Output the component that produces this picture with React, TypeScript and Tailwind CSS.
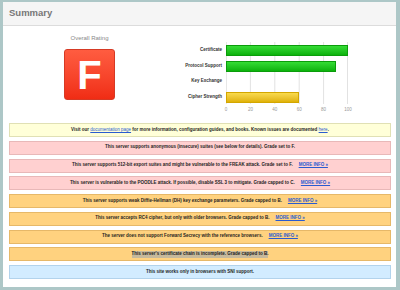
const bars = [
  { label: "Certificate", width: "w-[122px]", color: "green" },
  { label: "Protocol Support", width: "w-[110px]", color: "green" },
  { label: "Key Exchange", width: "w-0", color: "none" },
  { label: "Cipher Strength", width: "w-[73px]", color: "yellow" },
]

const ticks = ["0", "20", "40", "60", "80", "100"]

type Notice = {
  tone: "yellow" | "pink" | "orange" | "blue"
  text: string
  more?: boolean
  highlight?: boolean
}

const notices: Notice[] = [
  { tone: "pink", text: "This server supports anonymous (insecure) suites (see below for details). Grade set to F." },
  { tone: "pink", text: "This server supports 512-bit export suites and might be vulnerable to the FREAK attack. Grade set to F.", more: true },
  { tone: "pink", text: "This server is vulnerable to the POODLE attack. If possible, disable SSL 3 to mitigate. Grade capped to C.", more: true },
  { tone: "orange", text: "This server supports weak Diffie-Hellman (DH) key exchange parameters. Grade capped to B.", more: true },
  { tone: "orange", text: "This server accepts RC4 cipher, but only with older browsers. Grade capped to B.", more: true },
  { tone: "orange", text: "The server does not support Forward Secrecy with the reference browsers.", more: true },
  { tone: "orange", text: "This server's certificate chain is incomplete. Grade capped to B.", highlight: true },
  { tone: "blue", text: "This site works only in browsers with SNI support." },
]

const toneClass = {
  yellow: "bg-[#ffffd8] border-[#e0e0b4]",
  pink: "bg-[#ffd0d0] border-[#e8b8b8]",
  orange: "bg-[#ffd27f] border-[#e6b868]",
  blue: "bg-[#d2ecff] border-[#b2d3ec]",
}

const MoreInfo = () => (
  <a href="#" className="ml-[6px] text-[4.5px] font-bold text-[#2a5bd0] underline">
    MORE INFO »
  </a>
)

const App = () => {
  return (
    <div className="w-[400px] h-[290px] flex flex-col bg-white border-t-[2px] border-l-[3px] border-r-[4px] border-b-[3px] border-[#adc7c7] font-['Liberation_Sans',Arial,sans-serif] text-[#1e1e1e]">
      <div className="h-[24px] shrink-0 flex items-center pl-[6px] bg-[#f5f5f5] border-b border-[#dcdcdc]">
        <span className="text-[9.5px] font-bold text-[#777]">Summary</span>
      </div>

      <div className="h-[97px] shrink-0 flex">
        <div className="w-[173px] flex flex-col items-center pt-[8px]">
          <div className="text-[6px] leading-[8px] text-[#888]">Overall Rating</div>
          <div className="mt-[7px] w-[51px] h-[51px] rounded-[3px] border border-[#d63a25] bg-linear-to-b from-[#ff5c40] to-[#f02c14] flex items-center justify-center">
            <span className="text-[40px] leading-none font-bold text-white">F</span>
          </div>
        </div>

        <div className="flex pt-[16px]">
          <div className="w-[46px] flex flex-col pt-[3px] gap-[4.5px]">
            {bars.map((b) => (
              <div key={b.label} className="h-[11px] flex items-center justify-end text-[4.5px] font-bold whitespace-nowrap text-[#333]">
                {b.label}
              </div>
            ))}
          </div>

          <div className="ml-[4px] w-[122px]">
            <div className="relative h-[62px]">
              <svg className="absolute inset-0" width="122" height="62" viewBox="0 0 122 62">
                {[0, 24.4, 48.8, 73.2, 97.6, 121.5].map((x) => (
                  <line key={x} x1={x} y1="0" x2={x} y2="62" stroke={x === 0 ? "#cfcfcf" : "#e2e2e2"} strokeWidth="1" />
                ))}
              </svg>
              <div className="relative flex flex-col pt-[3px] gap-[4.5px]">
                {bars.map((b) => (
                  <div key={b.label} className="h-[11px]">
                    {b.color === "green" && (
                      <div className={`${b.width} h-full border border-[#0b9c0b] bg-linear-to-b from-[#34dc34] to-[#0ab20a]`} />
                    )}
                    {b.color === "yellow" && (
                      <div className={`${b.width} h-full border border-[#d3a600] bg-linear-to-b from-[#f9da4c] to-[#e0b200]`} />
                    )}
                  </div>
                ))}
              </div>
            </div>
            <div className="flex justify-between pt-[3px]">
              {ticks.map((t) => (
                <span key={t} className="w-0 flex justify-center text-[4.5px] leading-[6px] text-[#999]">
                  {t}
                </span>
              ))}
            </div>
          </div>
        </div>
      </div>

      <div className="flex flex-col gap-[3.75px] pl-[6px] pr-[5px]">
        <div className={`h-[14px] flex items-center justify-center border ${toneClass.yellow} text-[4.5px] font-bold whitespace-nowrap`}>
          <span>
            Visit our <a href="#" className="text-[#2a5bd0] underline font-normal">documentation page</a> for more information, configuration guides, and books. Known issues are documented{" "}
            <a href="#" className="text-[#2a5bd0] underline font-normal">here</a>.
          </span>
        </div>
        {notices.map((n) => (
          <div
            key={n.text}
            className={`h-[14px] flex items-center justify-center border ${toneClass[n.tone]} text-[4.5px] font-bold whitespace-nowrap`}
          >
            <span className={n.highlight ? "bg-[#c6b99c]" : ""}>{n.text}</span>
            {n.more && <MoreInfo />}
          </div>
        ))}
      </div>
    </div>
  )
}

export default App
